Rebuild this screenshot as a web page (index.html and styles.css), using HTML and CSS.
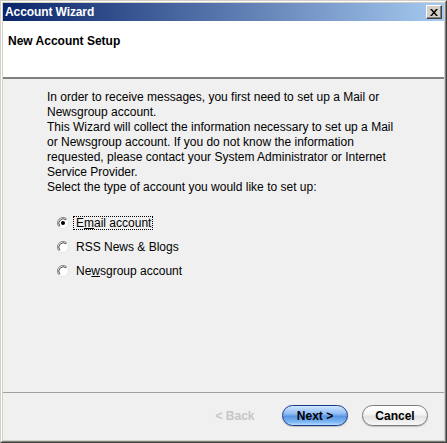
FILE: index.html
```html
<!DOCTYPE html>
<html>
<head>
<meta charset="utf-8">
<title>Account Wizard</title>
<link rel="stylesheet" href="styles.css">
</head>
<body>
<div class="window">
  <div class="frame">
    <div class="titlebar">
      <span class="title">Account Wizard</span>
      <span class="close" aria-label="Close">
        <svg width="8" height="7" viewBox="0 0 8 7"><path d="M0 0h2l2 2.5L6 0h2L5 3.5 8 7H6L4 4.5 2 7H0l3-3.5z" fill="#000"/></svg>
      </span>
    </div>
    <div class="header">
      <h1>New Account Setup</h1>
    </div>
    <div class="content">
      <p class="intro">In order to receive messages, you first need to set up a Mail or Newsgroup account.<br>This Wizard will collect the information necessary to set up a Mail or Newsgroup account. If you do not know the information requested, please contact your System Administrator or Internet Service Provider.<br>Select the type of account you would like to set up:</p>
      <div class="radios">
        <label class="radio">
          <svg class="dot" width="12" height="12" viewBox="0 0 12 12"><circle cx="6" cy="6" r="5.5" fill="#fff" stroke="#e4e4e4"/><path d="M2.1 9.9A5.5 5.5 0 0 1 9.9 2.1" stroke="#8a8a8a" fill="none"/><path d="M2.9 9.1A4.4 4.4 0 0 1 9.1 2.9" stroke="#505050" fill="none"/><circle cx="6" cy="6" r="2" fill="#000"/></svg>
          <span class="label focus">E<u>m</u>ail account</span>
        </label>
        <label class="radio">
          <svg class="dot" width="12" height="12" viewBox="0 0 12 12"><circle cx="6" cy="6" r="5.5" fill="#fff" stroke="#e4e4e4"/><path d="M2.1 9.9A5.5 5.5 0 0 1 9.9 2.1" stroke="#8a8a8a" fill="none"/><path d="M2.9 9.1A4.4 4.4 0 0 1 9.1 2.9" stroke="#505050" fill="none"/></svg>
          <span class="label">RSS News &amp; Blogs</span>
        </label>
        <label class="radio">
          <svg class="dot" width="12" height="12" viewBox="0 0 12 12"><circle cx="6" cy="6" r="5.5" fill="#fff" stroke="#e4e4e4"/><path d="M2.1 9.9A5.5 5.5 0 0 1 9.9 2.1" stroke="#8a8a8a" fill="none"/><path d="M2.9 9.1A4.4 4.4 0 0 1 9.1 2.9" stroke="#505050" fill="none"/></svg>
          <span class="label">Ne<u>w</u>sgroup account</span>
        </label>
      </div>
    </div>
    <div class="footer">
      <span class="btn disabled">&lt; Back</span>
      <span class="btn primary">Next &gt;</span>
      <span class="btn">Cancel</span>
    </div>
  </div>
</div>
</body>
</html>
```
FILE: styles.css
```css
* { box-sizing: border-box; }
html, body { margin: 0; padding: 0; }
body {
  font-family: "Liberation Sans", Arial, sans-serif;
  font-size: 12px;
  color: #000;
  background: #d4d0c8;
}
.window {
  width: 447px;
  height: 443px;
  border: 1px solid;
  border-color: #d4d0c8 #404040 #404040 #d4d0c8;
}
.frame {
  height: 100%;
  border: 1px solid;
  border-color: #ffffff #808080 #808080 #ffffff;
  padding: 1px;
  background: #d4d0c8;
  display: flex;
  flex-direction: column;
}
.titlebar {
  height: 18px;
  display: flex;
  align-items: center;
  justify-content: space-between;
  padding: 0 2px 0 2px;
  background: linear-gradient(to right, #0a246a, #a6caf0);
}
.title {
  color: #fff;
  font-weight: bold;
  font-size: 12px;
  letter-spacing: -0.1px;
}
.close {
  width: 16px;
  height: 14px;
  background: #d4d0c8;
  border: 1px solid;
  border-color: #fff #404040 #404040 #fff;
  box-shadow: inset -1px -1px 0 #808080;
  display: flex;
  align-items: center;
  justify-content: center;
}
.header {
  height: 58px;
  background: #fff;
  border-bottom: 2px solid #808080;
  box-shadow: 0 1px 0 #fff;
  padding: 13px 5px 0;
}
h1 {
  margin: 0;
  font-size: 12px;
  font-weight: bold;
  line-height: 15px;
}
.content {
  flex: 1;
  background: #f0f0f0;
  padding: 11px 40px 0 44px;
}
.intro {
  margin: 0;
  line-height: 15px;
}
.radios {
  margin-top: 16px;
  display: flex;
  flex-direction: column;
}
.radio {
  height: 24px;
  display: flex;
  align-items: center;
  padding-left: 10px;
}
.dot { flex: none; }
.label {
  margin-left: 4px;
  padding: 0 1px 0 2px;
  line-height: 12px;
  border: 1px solid transparent;
}
.label.focus { border: 1px dotted #000; }
.footer {
  height: 48px;
  background: #f0f0f0;
  border-top: 1px solid #a0a0a0;
  display: flex;
  justify-content: flex-end;
  align-items: flex-start;
  gap: 14px;
  padding: 12px 16px 0 0;
}
.btn {
  width: 66px;
  height: 21px;
  border-radius: 11px;
  display: flex;
  align-items: center;
  justify-content: center;
  font-weight: bold;
  font-size: 12px;
  border: 1px solid #7a7a7a;
  background: linear-gradient(#ffffff, #f4f4f4 45%, #e2e2e2 55%, #f8f8f8);
  box-shadow: 0 1px 1px rgba(0,0,0,0.2);
}
.btn.primary {
  border-color: #1b3a86;
  background: linear-gradient(#cfe6ff, #8fbdf4 40%, #5a95e4 55%, #7fb8f4 85%, #b8ddff);
}
.btn.disabled {
  border-color: transparent;
  background: none;
  box-shadow: none;
  color: #c6c6c6;
}
```
